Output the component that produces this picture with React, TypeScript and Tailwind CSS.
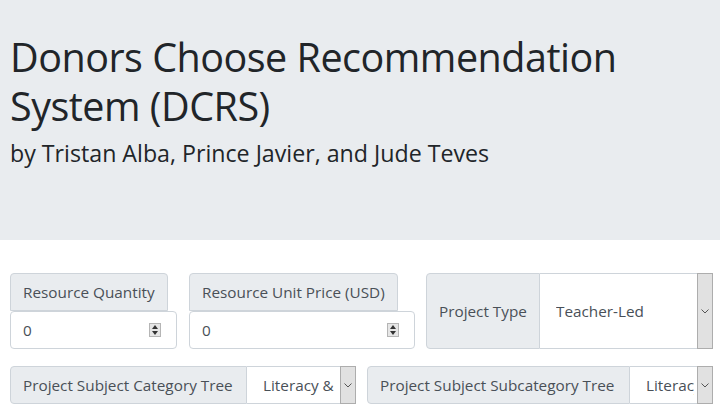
const font = { fontFamily: '"Open Sans", "Noto Sans", sans-serif' };

const Spinner = () => (
  <div className="w-[12px] h-[14px] bg-[#e6e6e6] border border-[#b5b5b5] flex flex-col items-center justify-center gap-[2px]">
    <svg width="6" height="4" viewBox="0 0 6 4">
      <path d="M0 4 L3 0 L6 4 Z" fill="#333" />
    </svg>
    <svg width="6" height="4" viewBox="0 0 6 4">
      <path d="M0 0 L3 4 L6 0 Z" fill="#333" />
    </svg>
  </div>
);

const Arrow = () => (
  <div className="w-[16px] shrink-0 self-stretch bg-[#e1e1e1] border border-[#adadad] flex items-center justify-center">
    <svg width="8" height="5" viewBox="0 0 8 5">
      <path d="M0.5 0.5 L4 4 L7.5 0.5" fill="none" stroke="#555" strokeWidth="1" />
    </svg>
  </div>
);

const NumberField = ({ label, width }: { label: string; width: string }) => (
  <div className={`flex flex-col shrink-0 ${width}`}>
    <div className="self-start h-[38px] px-[12px] flex items-center bg-[#e9ecef] border border-[#ced4da] rounded-t-[4px] text-[15.3px] text-[#495057]">
      {label}
    </div>
    <div className="h-[38px] flex items-center justify-between pl-[12px] pr-[15px] bg-white border border-[#ced4da] rounded-[4px] text-[15.3px] text-[#495057]">
      <span>0</span>
      <Spinner />
    </div>
  </div>
);

const SelectGroup = ({
  label,
  value,
  labelWidth,
  selectWidth,
  height,
}: {
  label: string;
  value: string;
  labelWidth: string;
  selectWidth: string;
  height: string;
}) => (
  <div className={`flex shrink-0 ${height} text-[15.3px] text-[#495057]`}>
    <div className={`${labelWidth} shrink-0 px-[12px] flex items-center bg-[#e9ecef] border border-[#ced4da] rounded-l-[4px] whitespace-nowrap`}>
      {label}
    </div>
    <div className={`${selectWidth} shrink-0 flex items-center pl-[16px] pr-[3px] bg-white border-y border-[#ced4da] overflow-hidden whitespace-nowrap`}>
      <span className="overflow-hidden">{value}</span>
    </div>
    <Arrow />
  </div>
);

export default function App() {
  return (
    <div className="w-[720px] h-[415px] bg-white overflow-hidden" style={font}>
      <div className="h-[240px] bg-[#e9ecef] px-[10px] pt-[33px] text-[#212529]">
        <h1 className="text-[39.5px] leading-[49px] tracking-[-0.5px]">
          Donors Choose Recommendation System (DCRS)
        </h1>
        <p className="text-[23.2px] leading-[30px] mt-[7px]">
          by Tristan Alba, Prince Javier, and Jude Teves
        </p>
      </div>
      <div className="flex px-[10px] pt-[33px]">
        <NumberField label="Resource Quantity" width="w-[167px]" />
        <div className="w-[12px] shrink-0" />
        <NumberField label="Resource Unit Price (USD)" width="w-[226px]" />
        <div className="w-[11px] shrink-0" />
        <SelectGroup
          label="Project Type"
          value="Teacher-Led"
          labelWidth="w-[114px]"
          selectWidth="w-[157px]"
          height="h-[76px]"
        />
      </div>
      <div className="flex gap-[11px] px-[10px] pt-[17px]">
        <SelectGroup
          label="Project Subject Category Tree"
          value="Literacy & Language"
          labelWidth="w-[237px]"
          selectWidth="w-[93px]"
          height="h-[38px]"
        />
        <SelectGroup
          label="Project Subject Subcategory Tree"
          value="Literacy"
          labelWidth="w-[263px]"
          selectWidth="w-[67px]"
          height="h-[38px]"
        />
      </div>
    </div>
  );
}
